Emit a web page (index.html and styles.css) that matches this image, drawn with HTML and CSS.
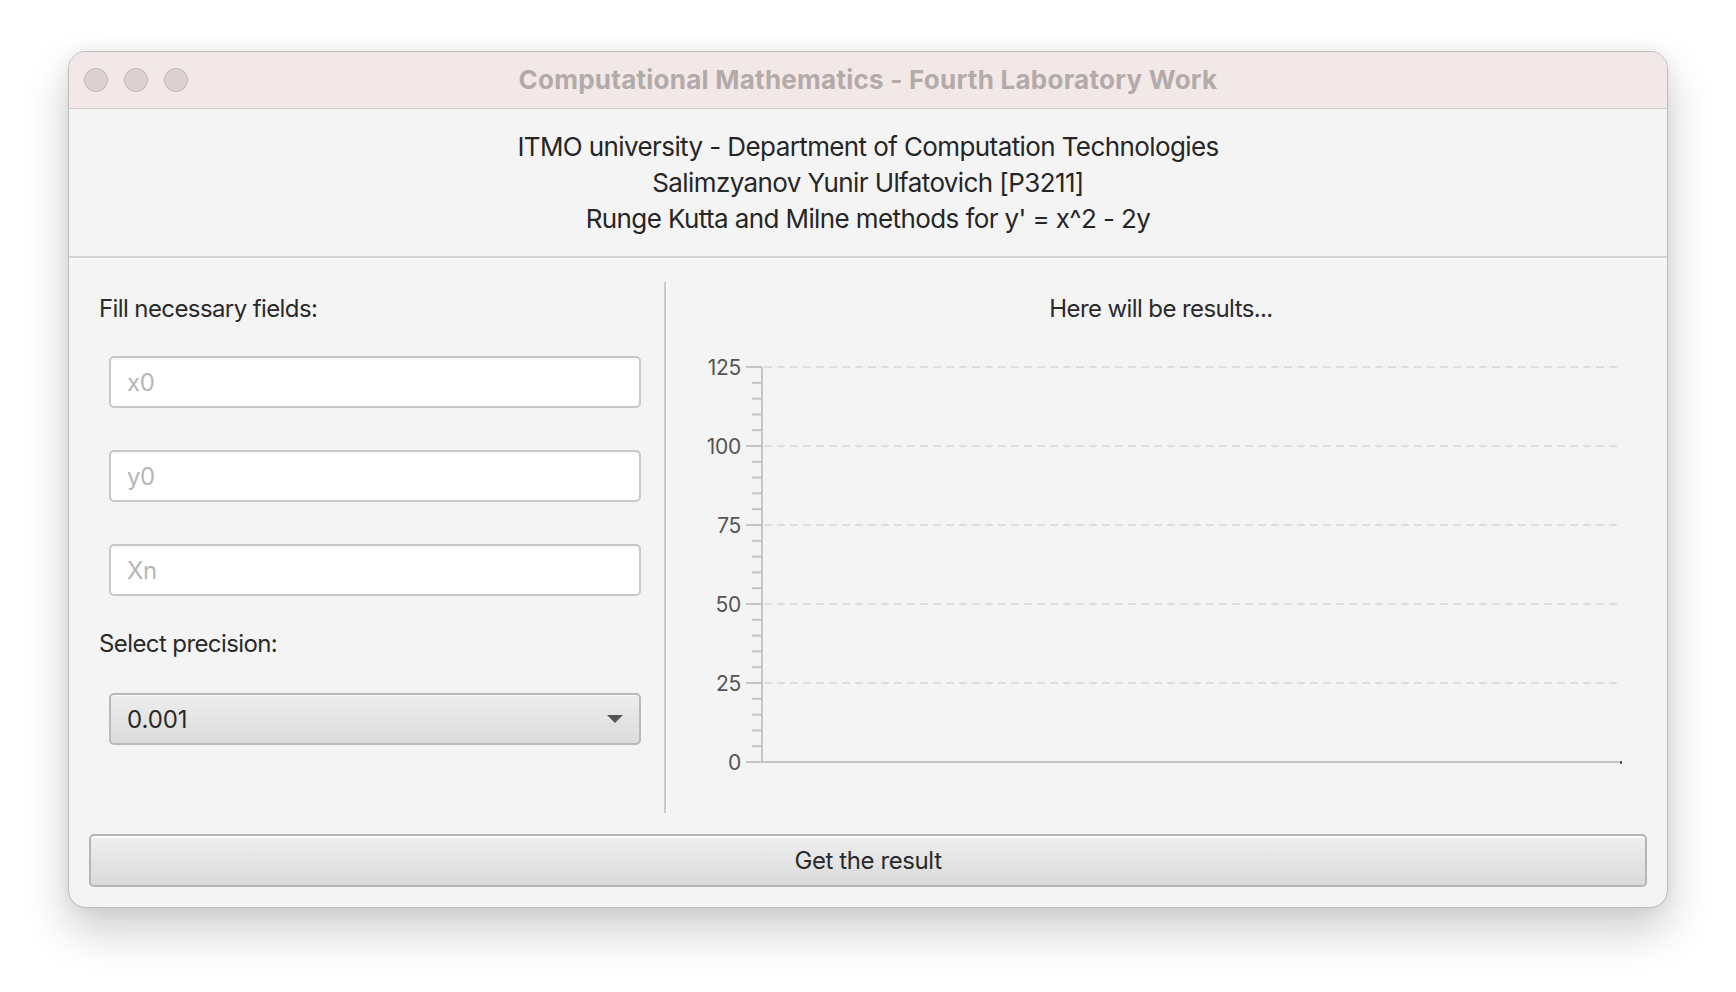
FILE: index.html
```html
<!DOCTYPE html>
<html lang="en">
<head>
<meta charset="utf-8">
<title>Computational Mathematics - Fourth Laboratory Work</title>
<link rel="stylesheet" href="styles.css">
</head>
<body>
<div class="desk">
  <div class="window">
    <div class="titlebar">
      <div class="lights">
        <span class="light"></span><span class="light"></span><span class="light"></span>
      </div>
      <div class="title">Computational Mathematics - Fourth Laboratory Work</div>
      <div></div>
    </div>
    <div class="content">
      <div class="header">
        <div>ITMO university - Department of Computation Technologies</div>
        <div>Salimzyanov Yunir Ulfatovich [P3211]</div>
        <div>Runge Kutta and Milne methods for y' = x^2 - 2y</div>
      </div>
      <div class="hsep"></div>
      <div class="main">
        <div class="left">
          <div class="label">Fill necessary fields:</div>
          <input class="field" type="text" placeholder="x0">
          <input class="field" type="text" placeholder="y0">
          <input class="field" type="text" placeholder="Xn">
          <div class="label label-sel">Select precision:</div>
          <div class="select"><span>0.001</span><span class="arrow"></span></div>
        </div>
        <div class="vsep"></div>
        <div class="right">
          <div class="label chart-title">Here will be results...</div>
          <svg class="chart" width="980" height="440" viewBox="0 0 980 440">
            <g class="grid" stroke="#dedede" stroke-width="2" stroke-dasharray="8 5">
              <line x1="97" y1="27" x2="954" y2="27"/>
              <line x1="97" y1="106" x2="954" y2="106"/>
              <line x1="97" y1="185" x2="954" y2="185"/>
              <line x1="97" y1="264" x2="954" y2="264"/>
              <line x1="97" y1="343" x2="954" y2="343"/>
            </g>
            <g stroke="#c4c4c4" stroke-width="2">
              <line x1="95" y1="27" x2="95" y2="423"/>
              <line x1="79" y1="422" x2="954" y2="422"/>
              <line x1="79" y1="27" x2="95" y2="27"/>
              <line x1="79" y1="106" x2="95" y2="106"/>
              <line x1="79" y1="185" x2="95" y2="185"/>
              <line x1="79" y1="264" x2="95" y2="264"/>
              <line x1="79" y1="343" x2="95" y2="343"/>
              <line x1="85" y1="42.8" x2="95" y2="42.8"/>
              <line x1="85" y1="58.6" x2="95" y2="58.6"/>
              <line x1="85" y1="74.4" x2="95" y2="74.4"/>
              <line x1="85" y1="90.2" x2="95" y2="90.2"/>
              <line x1="85" y1="121.8" x2="95" y2="121.8"/>
              <line x1="85" y1="137.6" x2="95" y2="137.6"/>
              <line x1="85" y1="153.4" x2="95" y2="153.4"/>
              <line x1="85" y1="169.2" x2="95" y2="169.2"/>
              <line x1="85" y1="200.8" x2="95" y2="200.8"/>
              <line x1="85" y1="216.6" x2="95" y2="216.6"/>
              <line x1="85" y1="232.4" x2="95" y2="232.4"/>
              <line x1="85" y1="248.2" x2="95" y2="248.2"/>
              <line x1="85" y1="279.8" x2="95" y2="279.8"/>
              <line x1="85" y1="295.6" x2="95" y2="295.6"/>
              <line x1="85" y1="311.4" x2="95" y2="311.4"/>
              <line x1="85" y1="327.2" x2="95" y2="327.2"/>
              <line x1="85" y1="358.8" x2="95" y2="358.8"/>
              <line x1="85" y1="374.6" x2="95" y2="374.6"/>
              <line x1="85" y1="390.4" x2="95" y2="390.4"/>
              <line x1="85" y1="406.2" x2="95" y2="406.2"/>
            </g>
            <rect x="953" y="421" width="2" height="3" fill="#555"/>
            <g class="ticklabels" text-anchor="end">
              <text x="74" y="35">125</text>
              <text x="74" y="114">100</text>
              <text x="74" y="193">75</text>
              <text x="74" y="272">50</text>
              <text x="74" y="351">25</text>
              <text x="74" y="430">0</text>
            </g>
          </svg>
        </div>
      </div>
      <div class="button">Get the result</div>
    </div>
  </div>
</div>
</body>
</html>
```

FILE: styles.css
```css
html, body {
  margin: 0;
  padding: 0;
  background: #ffffff;
}

body {
  font-family: "Inter", "Roboto", "Liberation Sans", sans-serif;
  color: #2c2c2c;
}

.desk {
  width: 1736px;
  height: 992px;
  box-sizing: border-box;
  padding: 51px 68px 0 68px;
}

.window {
  width: 1600px;
  height: 857px;
  box-sizing: border-box;
  border: 1px solid #bcbcbc;
  border-radius: 18px;
  overflow: hidden;
  background: #f4f4f4;
  box-shadow: 0 22px 46px rgba(0, 0, 0, 0.20), 0 0 16px rgba(0, 0, 0, 0.07);
  display: flex;
  flex-direction: column;
}

.titlebar {
  height: 56px;
  border-bottom: 1px solid #d2cccc;
  background: #f2e8e7;
  display: grid;
  grid-template-columns: 1fr auto 1fr;
  align-items: center;
}

.lights {
  display: flex;
  gap: 16px;
  padding-left: 15px;
}

.light {
  width: 22px;
  height: 22px;
  border-radius: 50%;
  background: #dbd1d1;
  border: 1px solid #c2b7b7;
}

.title {
  font-weight: 700;
  font-size: 26px;
  letter-spacing: 0.25px;
  color: #b3aaa9;
  margin-top: -1px;
}

.content {
  flex: 1;
  display: flex;
  flex-direction: column;
}

.header {
  text-align: center;
  font-size: 26px;
  letter-spacing: -0.6px;
  line-height: 36px;
  padding: 20px 0 19px 0;
  color: #262626;
}

.hsep {
  border-top: 2px solid #d3d3d3;
  border-bottom: 1px solid #fbfbfb;
}

.main {
  flex: 1;
  display: flex;
  padding-top: 23px;
}

.left {
  width: 595px;
  box-sizing: border-box;
  padding: 12px 23px 0 30px;
  display: flex;
  flex-direction: column;
}

.label {
  font-size: 24px;
  line-height: 30px;
  letter-spacing: -0.6px;
  color: #2a2a2a;
}

.field {
  display: block;
  margin: 32px 0 0 10px;
  height: 52px;
  box-sizing: border-box;
  border: 2px solid #c8c8c8;
  border-radius: 5px;
  background: #ffffff;
  box-shadow: inset 0 2px 2px rgba(0, 0, 0, 0.04);
  padding: 0 16px;
  font-family: "Inter", "Roboto", "Liberation Sans", sans-serif;
  font-size: 24px;
  letter-spacing: -0.4px;
  color: #2c2c2c;
  outline: none;
}

.field + .field {
  margin-top: 42px;
}

.field::placeholder {
  color: #b6b6b6;
}

.label-sel {
  margin-top: 33px;
}

.select {
  margin: 34px 0 0 10px;
  height: 52px;
  box-sizing: border-box;
  border: 2px solid #b9b9b9;
  border-radius: 5px;
  background: linear-gradient(#ededed, #dcdcdc);
  box-shadow: inset 0 1px 0 #fafafa;
  padding: 0 16px 0 16px;
  display: flex;
  align-items: center;
  justify-content: space-between;
  font-size: 24px;
  letter-spacing: -0.1px;
  color: #2a2a2a;
}

.arrow {
  width: 0;
  height: 0;
  border-left: 8px solid transparent;
  border-right: 8px solid transparent;
  border-top: 8px solid #545454;
}

.vsep {
  width: 2px;
  background: #cbcbcb;
  box-shadow: 1px 0 0 #fbfbfb;
}

.right {
  flex: 1;
  box-sizing: border-box;
  padding: 12px 12px 0 1px;
  display: flex;
  flex-direction: column;
}

.chart-title {
  text-align: center;
}

.chart {
  display: block;
  margin-top: 16px;
}

.ticklabels {
  font-family: "Inter", "Roboto", "Liberation Sans", sans-serif;
  font-size: 21px;
  fill: #555555;
  letter-spacing: -0.3px;
}

.button {
  margin: 21px 20px 20px 20px;
  height: 53px;
  box-sizing: border-box;
  border: 2px solid #b5b5b5;
  border-radius: 5px;
  background: linear-gradient(#efefef, #dadada);
  box-shadow: inset 0 2px 0 #fbfbfb;
  display: flex;
  align-items: center;
  justify-content: center;
  font-size: 24px;
  letter-spacing: -0.4px;
  color: #2a2a2a;
}
```
